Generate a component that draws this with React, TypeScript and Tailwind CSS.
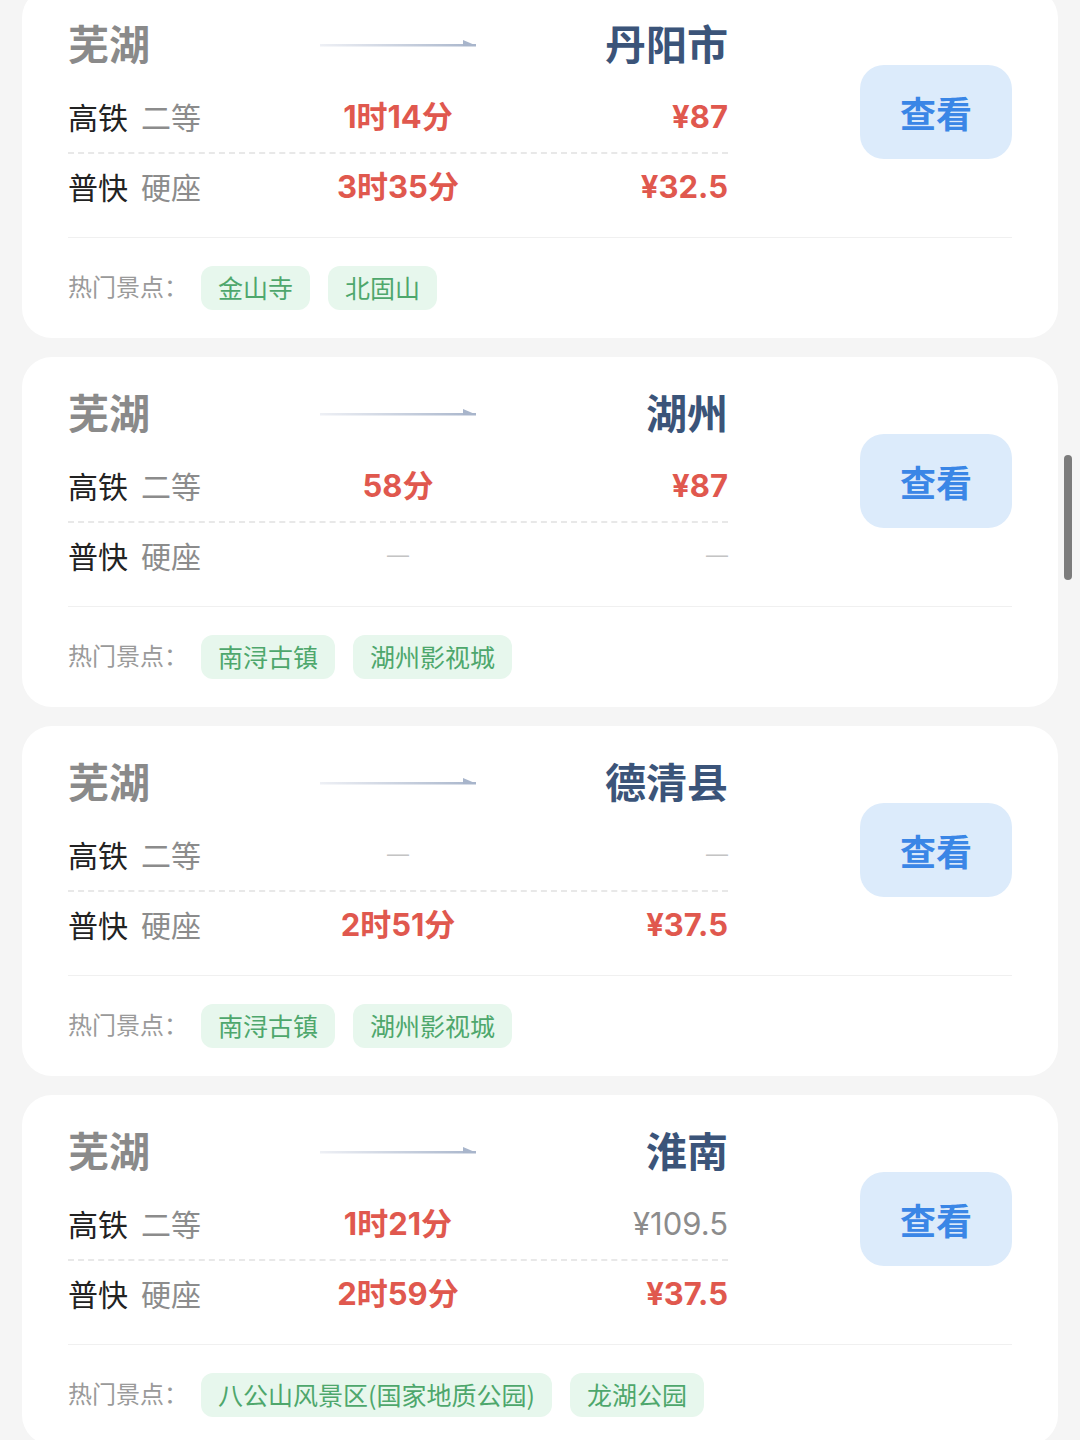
import React from 'react';

type Fare = { time: string | null; price: string | null; muted?: boolean };

interface Route {
  id: number;
  from: string;
  to: string;
  gaotie: Fare;
  pukuai: Fare;
  spots: string[];
}

const routes: Route[] = [
  {
    id: 1,
    from: '芜湖',
    to: '丹阳市',
    gaotie: { time: '1时14分', price: '¥87' },
    pukuai: { time: '3时35分', price: '¥32.5' },
    spots: ['金山寺', '北固山'],
  },
  {
    id: 2,
    from: '芜湖',
    to: '湖州',
    gaotie: { time: '58分', price: '¥87' },
    pukuai: { time: null, price: null },
    spots: ['南浔古镇', '湖州影视城'],
  },
  {
    id: 3,
    from: '芜湖',
    to: '德清县',
    gaotie: { time: null, price: null },
    pukuai: { time: '2时51分', price: '¥37.5' },
    spots: ['南浔古镇', '湖州影视城'],
  },
  {
    id: 4,
    from: '芜湖',
    to: '淮南',
    gaotie: { time: '1时21分', price: '¥109.5', muted: true },
    pukuai: { time: '2时59分', price: '¥37.5' },
    spots: ['八公山风景区(国家地质公园)', '龙湖公园'],
  },
];

const cjk = { fontFamily: '"Noto Sans CJK SC", sans-serif' };
const num = { fontFamily: 'Inter, "Noto Sans CJK SC", sans-serif' };

function Dash() {
  return <span className="text-[22px] font-light leading-none text-[#c4c4c4]" style={{ fontFamily: '"Liberation Sans", sans-serif' }}>—</span>;
}

function Arrow() {
  return (
    <svg width="156" height="12" viewBox="0 0 156 12">
      <defs>
        <linearGradient id="arrowGrad" x1="0" x2="1" y1="0" y2="0">
          <stop offset="0" stopColor="#eef0f5" />
          <stop offset="1" stopColor="#a8b5cb" />
        </linearGradient>
      </defs>
      <path d="M0 8 H156 V10.5 H0 Z" fill="url(#arrowGrad)" />
      <path d="M143 10 L143 4 L156 9.5 Z" fill="#a8b5cb" />
    </svg>
  );
}

function FareRow({ train, seat, fare, className }: { train: string; seat: string; fare: Fare; className: string }) {
  return (
    <div className={`grid grid-cols-[180px_300px_1fr] items-center ${className}`}>
      <div className="text-[30px] leading-none" style={cjk}>
        <span className="text-[#222]">{train}</span>
        <span className="ml-[13px] text-[#8c8c8c]">{seat}</span>
      </div>
      <div className="flex justify-center">
        {fare.time ? (
          <span className="text-[31px] font-bold leading-none text-[#e0584e]" style={num}>{fare.time}</span>
        ) : (
          <Dash />
        )}
      </div>
      <div className="flex justify-end">
        {fare.price ? (
          <span
            className={`text-[31px] leading-none ${fare.muted ? 'font-normal text-[#8c8c8c]' : 'font-bold text-[#e0584e]'}`}
            style={num}
          >
            {fare.price}
          </span>
        ) : (
          <Dash />
        )}
      </div>
    </div>
  );
}

function RouteCard({ route, first }: { route: Route; first?: boolean }) {
  return (
    <div className={`h-[350px] rounded-[30px] bg-white px-[46px] pt-[28px] ${first ? '-mt-[12px]' : ''}`}>
      <div className="flex items-start justify-between">
        <div className="w-[660px]">
          {/* route header */}
          <div className="grid h-[52px] grid-cols-[180px_300px_1fr] items-center">
            <span className="text-[41px] font-bold leading-none text-[#8a8a8a]" style={cjk}>{route.from}</span>
            <div className="flex justify-center">
              <Arrow />
            </div>
            <span className="text-right text-[41px] font-bold leading-none text-[#3b5479]" style={cjk}>{route.to}</span>
          </div>
          <FareRow train="高铁" seat="二等" fare={route.gaotie} className="mt-[12px] h-[74px] border-b-2 border-dashed border-[#e8e8e8]" />
          <FareRow train="普快" seat="硬座" fare={route.pukuai} className="h-[64px]" />
        </div>
        <button
          className="mt-[49px] flex h-[94px] w-[152px] items-center justify-center rounded-[24px] bg-[#dcebfb] text-[36px] font-bold text-[#3a86e6]"
          style={cjk}
        >
          查看
        </button>
      </div>
      <div className="mt-[19px] h-px bg-[#f0f0f0]" />
      {/* hot spots */}
      <div className="mt-[28px] flex h-[44px] items-center">
        <span className="mr-[13px] -mt-[4px] text-[24px] text-[#9a9a9a]" style={cjk}>热门景点：</span>
        <div className="flex gap-[18px]">
          {route.spots.map((s) => (
            <span
              key={s}
              className="flex h-[44px] items-center rounded-[12px] bg-[#e7f7ed] px-[17px] text-[25px] text-[#4ea76c]"
              style={cjk}
            >
              {s}
            </span>
          ))}
        </div>
      </div>
    </div>
  );
}

export default function App() {
  return (
    <div className="relative h-[1440px] overflow-hidden bg-[#f5f5f5] px-[22px]">
      <div className="flex flex-col gap-[19px]">
        {routes.map((r, i) => (
          <RouteCard key={r.id} route={r} first={i === 0} />
        ))}
      </div>
      {/* scroll indicator */}
      <div className="absolute left-[1064px] top-[455px] h-[125px] w-[8px] rounded-full bg-[#7c7c7c]" />
    </div>
  );
}
